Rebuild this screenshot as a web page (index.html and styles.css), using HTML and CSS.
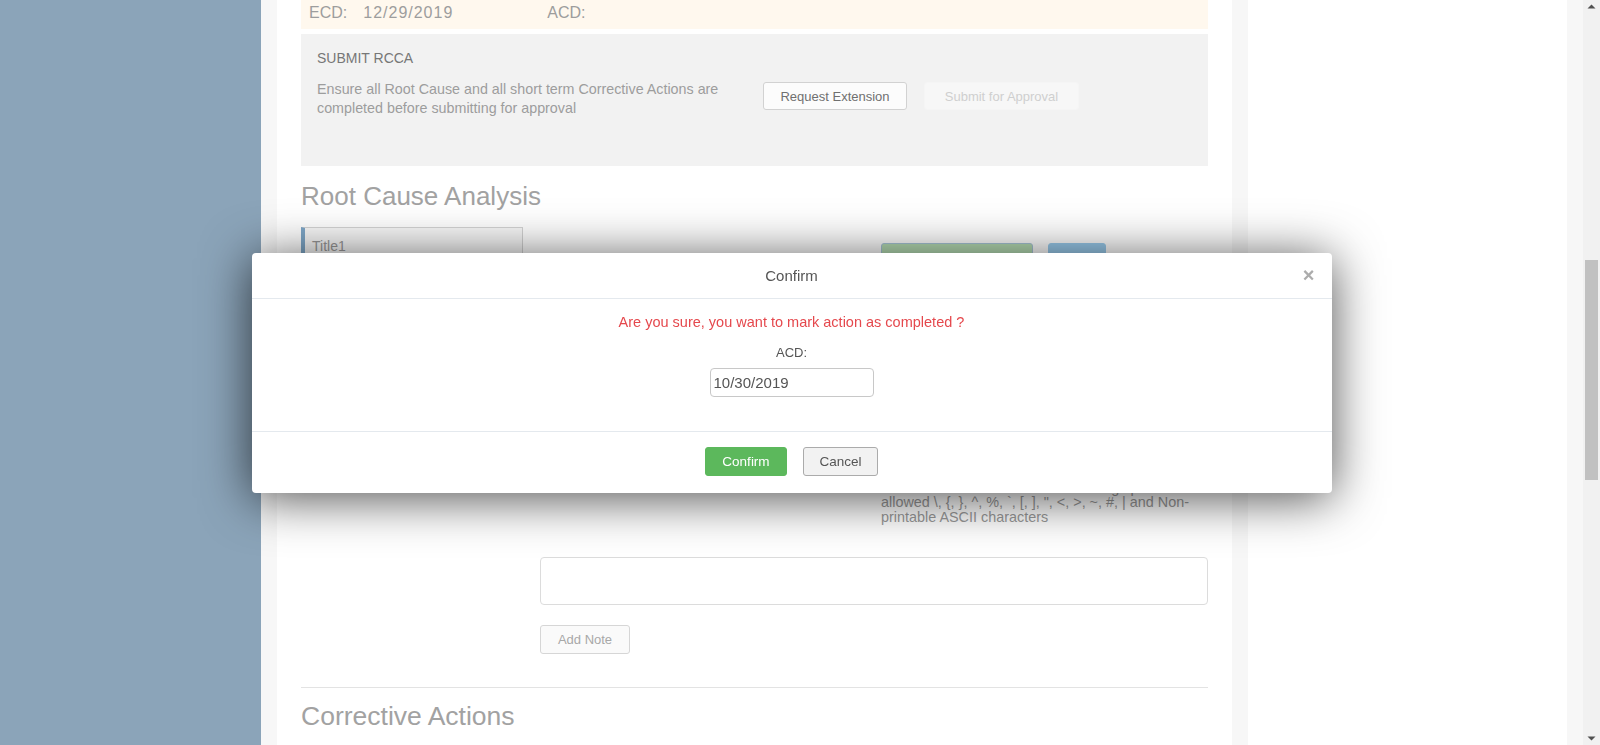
FILE: index.html
```html
<!DOCTYPE html>
<html lang="en">
<head>
<meta charset="utf-8">
<title>RCCA</title>
<link rel="stylesheet" href="styles.css">
</head>
<body>
<div class="app">
  <aside class="sidebar"></aside>
  <div class="page">
    <main class="main">
      <div class="dates">
        <span class="date-label">ECD:</span><span class="date-val">12/29/2019</span>
        <span class="date-label acd">ACD:</span>
      </div>
      <section class="submit-box">
        <div class="submit-title">SUBMIT RCCA</div>
        <div class="submit-row">
          <p class="submit-text">Ensure all Root Cause and all short term Corrective Actions are completed before submitting for approval</p>
          <button class="btn btn-default">Request Extension</button>
          <button class="btn btn-disabled">Submit for Approval</button>
        </div>
      </section>

      <h2 class="section-title">Root Cause Analysis</h2>
      <div class="rca-row">
        <div class="rca-tabs">
          <div class="rca-tab">Title1</div>
        </div>
        <div class="rca-mid"></div>
        <div class="rca-side">
          <div class="rca-actions">
            <button class="btn btn-green">Mark Completed</button>
            <button class="btn btn-blue">Edit</button>
          </div>
          <p class="hint">Maximum 2000 characters. Following special chars not<br>allowed \, {, }, ^, %, `, [, ], ", &lt;, &gt;, ~, #, | and Non-<br>printable ASCII characters</p>
        </div>
      </div>

      <div class="notes">
        <div class="notes-label"></div>
        <div class="notes-body">
          <textarea class="note-input"></textarea>
          <button class="btn btn-light">Add Note</button>
        </div>
      </div>

      <hr class="divider">
      <h2 class="section-title">Corrective Actions</h2>
    </main>
    <div class="side"></div>
  </div>
  <div class="scrollbar">
    <div class="sb-arrow"><svg width="9" height="5" viewBox="0 0 9 5"><path d="M0.5 4.5 L4.5 0.5 L8.5 4.5 Z" fill="#505050"/></svg></div>
    <div class="sb-track"><div class="sb-thumb"></div></div>
    <div class="sb-arrow"><svg width="9" height="5" viewBox="0 0 9 5"><path d="M0.5 0.5 L4.5 4.5 L8.5 0.5 Z" fill="#505050"/></svg></div>
  </div>
</div>

<div class="overlay">
  <div class="modal">
    <div class="modal-header">
      <span></span>
      <h4 class="modal-title">Confirm</h4>
      <button class="close">&times;</button>
    </div>
    <div class="modal-body">
      <p class="warn">Are you sure, you want to mark action as completed ?</p>
      <label class="acd-label">ACD:</label>
      <input class="acd-input" type="text" value="10/30/2019">
    </div>
    <div class="modal-footer">
      <button class="btn btn-success">Confirm</button>
      <button class="btn btn-cancel">Cancel</button>
    </div>
  </div>
</div>
</body>
</html>
```
FILE: styles.css
```css
* { box-sizing: border-box; }
html, body { margin: 0; padding: 0; height: 100%; }
body {
  font-family: "Liberation Sans", Arial, sans-serif;
  color: #555;
  overflow: hidden;
}
.app {
  display: flex;
  height: 745px;
  overflow: hidden;
}
.sidebar {
  width: 261px;
  flex: 0 0 261px;
  background: #8ba4b9;
}
.page {
  flex: 1;
  display: flex;
  gap: 16px;
  padding: 0 16px;
  background: #f7f7f7;
}
.main {
  width: 955px;
  flex: 0 0 955px;
  background: #fff;
  padding: 0 24px;
}
.side {
  flex: 1;
  background: #fff;
}

/* dates band */
.dates {
  height: 29px;
  background: #fff8ee;
  padding-left: 8px;
  font-size: 16px;
  line-height: 26px;
  color: #9d9d9d;
  display: flex;
}
.date-label { margin-right: 16px; }
.date-val { letter-spacing: 1px; }
.date-label.acd { margin-left: 94px; }

/* submit box */
.submit-box {
  margin-top: 5px;
  background: #f2f2f2;
  min-height: 132px;
  padding: 14px 16px 0;
}
.submit-title {
  font-size: 14px;
  line-height: 20px;
  color: #777;
}
.submit-row {
  display: flex;
  align-items: flex-start;
  margin-top: 12px;
}
.submit-text {
  margin: 0;
  width: 430px;
  margin-right: 16px;
  font-size: 14.3px;
  line-height: 19px;
  color: #9d9d9d;
}
.btn {
  font-family: "Liberation Sans", Arial, sans-serif;
  height: 29px;
  padding: 0 17px;
  font-size: 13px;
  border-radius: 3px;
  border: 1px solid transparent;
  background: #fff;
  color: #666;
  cursor: pointer;
  white-space: nowrap;
}
.submit-row .btn { margin-top: 2px; height: 28px; }
.btn-default {
  width: 144px;
  padding: 0;
  border-color: #d2d2d2;
  background: #fcfcfc;
  color: #707070;
  margin-right: 17px;
}
.btn-disabled {
  width: 155px;
  padding: 0;
  background: #f7f7f7;
  border-color: #f5f5f5;
  color: #cfcfcf;
}

.section-title {
  margin: 16px 0 0;
  font-size: 26px;
  line-height: 28px;
  font-weight: normal;
  color: #a2a2a2;
}

/* RCA row (mostly under the modal) */
.rca-row {
  margin-top: 17px;
  display: grid;
  grid-template-columns: 222px 1fr 327px;
  min-height: 297px;
}
.rca-tab {
  border: 1px solid #d4d4d4;
  border-left: 4px solid #7fa8c9;
  background: #f9f9f9;
  height: 44px;
  padding: 10px 7px 0;
  font-size: 14px;
  color: #999;
}
.rca-side {
  display: flex;
  flex-direction: column;
  justify-content: space-between;
  padding-top: 16px;
}
.rca-actions { display: flex; gap: 15px; }
.btn-green {
  width: 152px;
  height: 34px;
  padding: 0;
  background: #b8dfb6;
  border-color: #a9c7d8;
  color: #fff;
}
.btn-blue {
  width: 58px;
  height: 34px;
  padding: 0;
  background: #9bcdee;
  border-color: #9bcdee;
  color: #fff;
}
.hint {
  margin: 0;
  font-size: 14.4px;
  line-height: 14.3px;
  color: #9a9a9a;
  white-space: nowrap;
}

/* notes */
.notes {
  margin-top: 33px;
  display: grid;
  grid-template-columns: 239px 1fr;
}
.notes-body { display: flex; flex-direction: column; align-items: flex-start; }
.note-input {
  width: 100%;
  height: 48px;
  border: 1px solid #dcdcdc;
  border-radius: 4px;
  resize: none;
  display: block;
}
.btn-light {
  margin-top: 20px;
  width: 90px;
  padding: 0;
  background: #fafafa;
  border-color: #d6d6d6;
  color: #a8a8a8;
}
.divider {
  margin: 33px 0 0;
  border: 0;
  border-top: 1px solid #e3e3e3;
}
.divider + .section-title { margin-top: 14px; font-size: 26.5px; }

/* scrollbar */
.scrollbar {
  width: 17px;
  flex: 0 0 17px;
  background: #f1f1f1;
  display: flex;
  flex-direction: column;
}
.sb-arrow {
  height: 17px;
  display: flex;
  align-items: center;
  justify-content: center;
}
.sb-arrow:first-child { align-items: flex-start; padding-top: 4px; }
.sb-arrow:last-child { align-items: flex-end; padding-bottom: 4px; }
.sb-track { flex: 1; padding: 0 2px; }
.sb-thumb {
  margin-top: 243px;
  height: 220px;
  background: #c1c1c1;
}

/* modal */
.overlay {
  position: fixed;
  top: 0; left: 0; bottom: 0; right: 17px;
  display: flex;
  align-items: center;
  justify-content: center;
}
.modal {
  width: 1080px;
  height: 240px;
  background: #fff;
  border-radius: 4px;
  box-shadow: 0 5px 50px rgba(0,0,0,.7);
  display: flex;
  flex-direction: column;
}
.modal-header {
  height: 46px;
  border-bottom: 1px solid #e4e9ee;
  display: grid;
  grid-template-columns: 1fr auto 1fr;
  align-items: center;
}
.modal-title {
  margin: 0;
  font-size: 15px;
  font-weight: normal;
  color: #555;
  line-height: 45px;
}
.close {
  justify-self: end;
  margin-right: 17px;
  border: 0;
  background: none;
  padding: 0;
  font-family: "Liberation Sans", Arial, sans-serif;
  font-size: 20px;
  font-weight: bold;
  line-height: 20px;
  color: #acacac;
}
.modal-body {
  flex: 1;
  display: flex;
  flex-direction: column;
  align-items: center;
  padding-top: 13px;
}
.warn {
  margin: 0;
  font-size: 14.5px;
  line-height: 20px;
  color: #e5484d;
}
.acd-label {
  margin-top: 11px;
  font-size: 13px;
  line-height: 20px;
  color: #555;
}
.acd-input {
  margin-top: 5px;
  width: 164px;
  height: 29px;
  border: 1px solid #c8c8c8;
  border-radius: 4px;
  padding: 0 3px;
  font-family: "Liberation Sans", Arial, sans-serif;
  font-size: 15px;
  color: #555;
}
.modal-footer {
  height: 62px;
  border-top: 1px solid #e4e9ee;
  display: flex;
  justify-content: center;
  align-items: flex-start;
  gap: 16px;
  padding-top: 15px;
}
.btn-success {
  width: 82px;
  padding: 0;
  background: #5cb85c;
  border-color: #5cb85c;
  color: #fff;
  font-size: 13.5px;
}
.btn-cancel {
  width: 75px;
  padding: 0;
  background: #f2f2f2;
  border-color: #ababab;
  color: #555;
  font-size: 13.5px;
}
```
